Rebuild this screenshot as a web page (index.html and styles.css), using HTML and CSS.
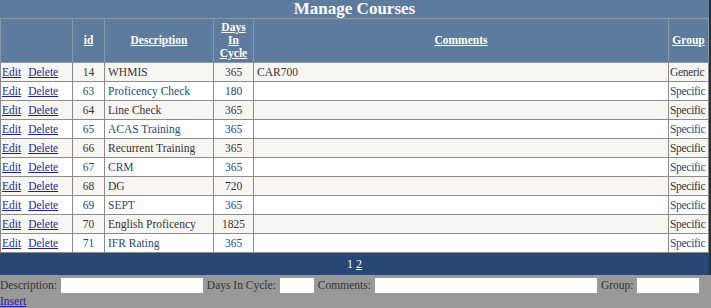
FILE: index.html
```html
<!DOCTYPE html>
<html>
<head>
<meta charset="utf-8">
<link rel="stylesheet" href="styles.css">
</head>
<body>
<div class="page">
  <div class="grid-wrap">
    <table class="grid">
      <caption class="title">Manage Courses</caption>
      <colgroup>
        <col class="c-cmd"><col class="c-id"><col class="c-desc"><col class="c-days"><col class="c-com"><col class="c-grp">
      </colgroup>
      <thead>
        <tr class="head">
          <th></th>
          <th><a href="#">id</a></th>
          <th><a href="#">Description</a></th>
          <th><a href="#">Days In Cycle</a></th>
          <th><a href="#">Comments</a></th>
          <th><a href="#">Group</a></th>
        </tr>
      </thead>
      <tbody>
        <tr class="row"><td class="cmd"><a href="#">Edit</a><a href="#" class="del">Delete</a></td><td class="num">14</td><td>WHMIS</td><td class="num">365</td><td>CAR700</td><td class="grp">Generic</td></tr>
        <tr class="alt"><td class="cmd"><a href="#">Edit</a><a href="#" class="del">Delete</a></td><td class="num">63</td><td>Proficency Check</td><td class="num">180</td><td></td><td class="grp">Specific</td></tr>
        <tr class="row"><td class="cmd"><a href="#">Edit</a><a href="#" class="del">Delete</a></td><td class="num">64</td><td>Line Check</td><td class="num">365</td><td></td><td class="grp">Specific</td></tr>
        <tr class="alt"><td class="cmd"><a href="#">Edit</a><a href="#" class="del">Delete</a></td><td class="num">65</td><td>ACAS Training</td><td class="num">365</td><td></td><td class="grp">Specific</td></tr>
        <tr class="row"><td class="cmd"><a href="#">Edit</a><a href="#" class="del">Delete</a></td><td class="num">66</td><td>Recurrent Training</td><td class="num">365</td><td></td><td class="grp">Specific</td></tr>
        <tr class="alt"><td class="cmd"><a href="#">Edit</a><a href="#" class="del">Delete</a></td><td class="num">67</td><td>CRM</td><td class="num">365</td><td></td><td class="grp">Specific</td></tr>
        <tr class="row"><td class="cmd"><a href="#">Edit</a><a href="#" class="del">Delete</a></td><td class="num">68</td><td>DG</td><td class="num">720</td><td></td><td class="grp">Specific</td></tr>
        <tr class="alt"><td class="cmd"><a href="#">Edit</a><a href="#" class="del">Delete</a></td><td class="num">69</td><td>SEPT</td><td class="num">365</td><td></td><td class="grp">Specific</td></tr>
        <tr class="row"><td class="cmd"><a href="#">Edit</a><a href="#" class="del">Delete</a></td><td class="num">70</td><td>English Proficency</td><td class="num">1825</td><td></td><td class="grp">Specific</td></tr>
        <tr class="alt"><td class="cmd"><a href="#">Edit</a><a href="#" class="del">Delete</a></td><td class="num">71</td><td>IFR Rating</td><td class="num">365</td><td></td><td class="grp">Specific</td></tr>
        <tr class="pager"><td colspan="6"><span>1</span> <a href="#">2</a></td></tr>
      </tbody>
    </table>
  </div>
  <div class="form-area">
    <div class="form-row">
      <label class="lbl">Description:</label><input class="inp w-desc" type="text">
      <label class="lbl">Days In Cycle:</label><input class="inp w-days" type="text">
      <label class="lbl">Comments:</label><input class="inp w-com" type="text">
      <label class="lbl">Group:</label><input class="inp w-grp" type="text">
    </div>
    <a href="#" class="insert">Insert</a>
  </div>
</div>
</body>
</html>
```
FILE: styles.css
```css
html, body {
  margin: 0;
  padding: 0;
}
body {
  background: #999999;
  font-family: "Liberation Serif", "Times New Roman", serif;
  font-size: 11.5px;
  color: #333333;
  width: 711px;
  height: 308px;
  overflow: hidden;
}
.page {
  width: 711px;
}
.grid-wrap {
  width: 708px;
  border-right: 3px solid #2e2e2e;
}
.grid {
  width: 708px;
  table-layout: fixed;
  border-collapse: collapse;
  background: #ffffff;
}
.c-cmd { width: 72px; }
.c-id { width: 32px; }
.c-desc { width: 109px; }
.c-days { width: 40px; }
.c-com { width: 415px; }
.c-grp { width: 40px; }
.title {
  background: #5d7b9d;
  color: #ffffff;
  font-weight: bold;
  font-size: 17px;
  line-height: 18px;
  height: 18px;
  text-align: center;
}
.grid th, .grid td {
  border: 1px solid #8c8c8c;
  overflow: hidden;
  white-space: nowrap;
}
.head th {
  background: #5d7b9d;
  color: #ffffff;
  font-weight: bold;
  font-size: 11.5px;
  line-height: 13px;
  padding: 2px 1px;
  text-align: center;
  vertical-align: middle;
  border-color: #8a97a6;
  white-space: normal;
}
.head th a {
  color: #ffffff;
}
.grid td {
  line-height: 14px;
  padding: 2px 3px;
}
.row { background: #f7f6f3; color: #333333; }
.alt { background: #ffffff; color: #284775; }
.grid td.num { text-align: center; }
.grid td.grp { padding: 2px 0 2px 1px; letter-spacing: -0.3px; }
.grid td.cmd { padding: 2px 1px; }
.cmd a { color: #1f1f9e; }
.cmd .del { margin-left: 7px; }
.grid tr.pager td {
  background: #284775;
  color: #ffffff;
  text-align: center;
  font-size: 12px;
  line-height: 14px;
  padding: 4px 0 3px;
  border-color: #284775;
}
.pager a { color: #ffffff; }
.form-area {
  padding-top: 2px;
}
.form-row {
  display: flex;
  align-items: center;
  height: 16px;
}
.lbl {
  margin-right: 4px;
  line-height: 14px;
  white-space: nowrap;
  flex-shrink: 0;
}
.inp {
  flex-shrink: 0;
  height: 15px;
  border: none;
  padding: 0;
  margin: 0 4px 0 0;
  background: #ffffff;
  box-sizing: border-box;
}
.w-desc { width: 142px; }
.w-days { width: 34px; }
.w-com { width: 222px; }
.w-grp { width: 62px; }
.insert {
  display: block;
  color: #2222aa;
  line-height: 14px;
  margin-top: 1px;
}
```
